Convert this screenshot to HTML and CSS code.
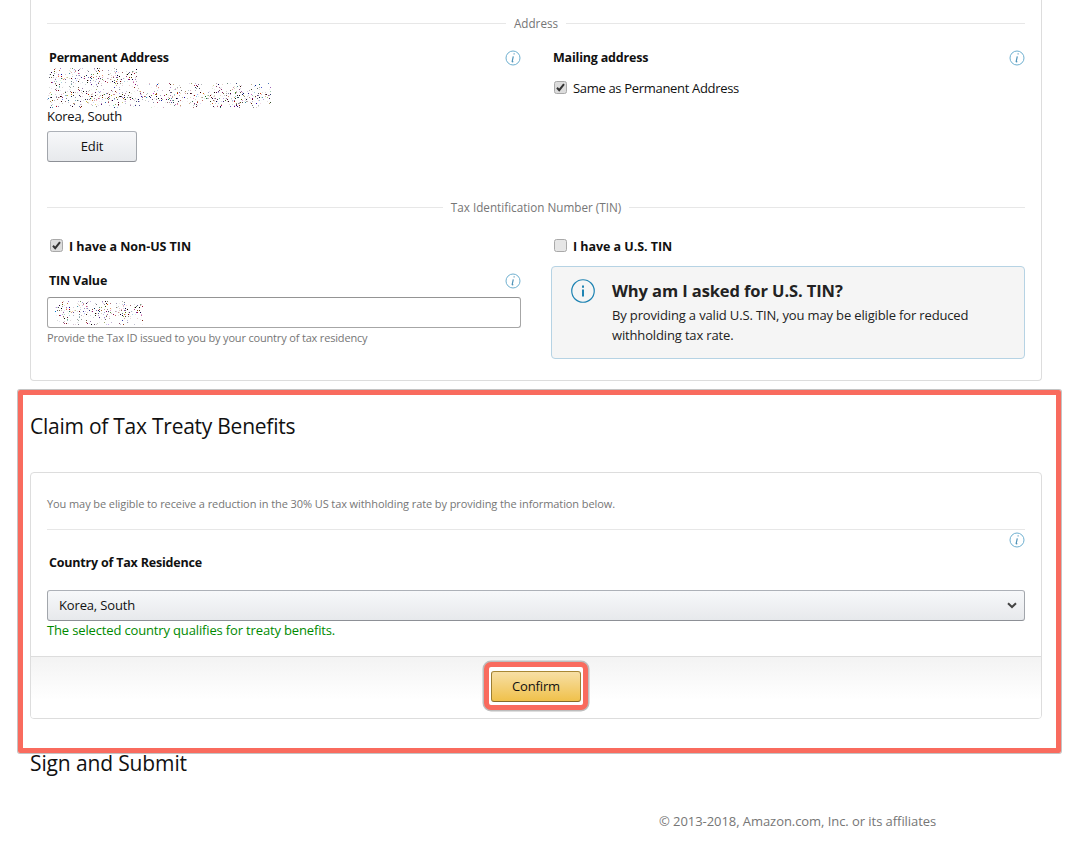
FILE: index.html
```html
<!DOCTYPE html>
<html lang="en">
<head>
<meta charset="utf-8">
<title>Tax Information</title>
<link rel="stylesheet" href="styles.css">
</head>
<body>
<svg class="defs" width="0" height="0" aria-hidden="true">
  <defs>
    <filter id="noise" x="0" y="0" width="100%" height="100%" color-interpolation-filters="sRGB">
      <feTurbulence type="fractalNoise" baseFrequency="0.95" numOctaves="2" seed="7"/>
      <feColorMatrix type="matrix" values="2.2 .8 0 0 -1.2  .4 2.2 .4 0 -1.3  0 .8 2.2 0 -1.2  0 0 0 12 -7.7"/>
    </filter>
    <clipPath id="address-shape">
      <path d="M2 0H90V15H224V40H0V18H2Z"/>
    </clipPath>
    <symbol id="info" viewBox="0 0 16 16">
      <circle cx="8" cy="8" r="7" fill="none" stroke="#6fb0d0" stroke-width="1"/>
      <path d="M8.6 3.9h1M8.3 6.4 7.2 11.4c-.1.6.4.6 1.1.1" fill="none" stroke="#4f93b8" stroke-width="1.2"/>
    </symbol>
    <symbol id="tick" viewBox="0 0 13 13">
      <rect x=".5" y=".5" width="12" height="12" rx="2" fill="#dcdcdc" stroke="#a9a9a9"/>
      <path d="M3 6.8 5.2 9.2 10 3.2" fill="none" stroke="#333" stroke-width="2"/>
    </symbol>
    <symbol id="untick" viewBox="0 0 13 13">
      <rect x=".5" y=".5" width="12" height="12" rx="2" fill="#e6e6e6" stroke="#a9a9a9"/>
    </symbol>
  </defs>
</svg>

<main class="page">
  <section class="card card-top">
    <div class="divider"><span>Address</span></div>
    <div class="cols cols-address">
      <div class="col">
        <div class="field-head">
          <strong>Permanent Address</strong>
          <svg class="icon-info"><use href="#info"/></svg>
        </div>
        <svg class="noise noise-address" width="224" height="40" aria-hidden="true">
          <g clip-path="url(#address-shape)"><rect width="224" height="40" filter="url(#noise)"/></g>
        </svg>
        <div class="country">Korea, South</div>
        <button class="btn btn-edit" type="button">Edit</button>
      </div>
      <div class="col">
        <div class="field-head">
          <strong>Mailing address</strong>
          <svg class="icon-info"><use href="#info"/></svg>
        </div>
        <label class="check check-same">
          <svg class="box"><use href="#tick"/></svg>
          <span>Same as Permanent Address</span>
        </label>
      </div>
    </div>

    <div class="divider divider-tin"><span>Tax Identification Number (TIN)</span></div>
    <div class="cols cols-tin">
      <div class="col">
        <label class="check check-bold">
          <svg class="box"><use href="#tick"/></svg>
          <span>I have a Non-US TIN</span>
        </label>
        <div class="field-head field-tin">
          <strong>TIN Value</strong>
          <svg class="icon-info"><use href="#info"/></svg>
        </div>
        <div class="input">
          <svg class="noise" width="88" height="24" aria-hidden="true">
            <rect width="88" height="24" filter="url(#noise)"/>
          </svg>
        </div>
        <p class="hint">Provide the Tax ID issued to you by your country of tax residency</p>
      </div>
      <div class="col">
        <label class="check check-bold">
          <svg class="box"><use href="#untick"/></svg>
          <span>I have a U.S. TIN</span>
        </label>
        <div class="alert">
          <svg class="alert-icon" viewBox="0 0 24 24" width="24" height="24" aria-hidden="true">
            <circle cx="12" cy="12" r="11.25" fill="none" stroke="#1f84b3" stroke-width="1.2"/>
            <path d="M12 6.6v2.2M12 10.6v7" fill="none" stroke="#1f84b3" stroke-width="2"/>
          </svg>
          <div>
            <h4>Why am I asked for U.S. TIN?</h4>
            <p>By providing a valid U.S. TIN, you may be eligible for reduced withholding tax rate.</p>
          </div>
        </div>
      </div>
    </div>
  </section>

  <section class="claim">
    <div class="highlight"></div>
    <h2 class="claim-title">Claim of Tax Treaty Benefits</h2>
    <div class="card card-claim">
      <div class="claim-body">
        <p class="lead">You may be eligible to receive a reduction in the 30% US tax withholding rate by providing the information below.</p>
        <div class="rule"></div>
        <div class="field-head field-country">
          <strong>Country of Tax Residence</strong>
          <svg class="icon-info"><use href="#info"/></svg>
        </div>
        <div class="select">
          <span>Korea, South</span>
          <svg width="10" height="7" viewBox="0 0 10 7" aria-hidden="true"><path d="M1 1.2 5 5 9 1.2" fill="none" stroke="#444" stroke-width="2"/></svg>
        </div>
        <p class="ok">The selected country qualifies for treaty benefits.</p>
      </div>
      <div class="claim-foot">
        <span class="confirm-ring"><button class="btn btn-confirm" type="button">Confirm</button></span>
      </div>
    </div>
  </section>

  <h2 class="sign-title">Sign and Submit</h2>
  <footer class="copyright">© 2013-2018, Amazon.com, Inc. or its affiliates</footer>
</main>
</body>
</html>
```

FILE: styles.css
```css
* { box-sizing: border-box; }
html, body { margin: 0; padding: 0; background: #fff; }
body {
  font-family: "Open Sans", "Noto Sans", "Liberation Sans", sans-serif;
  font-size: 13px;
  line-height: 19px;
  letter-spacing: -0.15px;
  color: #111;
  height: 844px;
  overflow: hidden;
}
.defs { position: absolute; }
.page { width: 1072px; padding: 0 30px; }
.card { border: 1px solid #ddd; border-radius: 4px; background: #fff; }
.card-top {
  border-top: 0;
  border-radius: 0 0 4px 4px;
  height: 381px;
  padding: 14px 16px 0;
}
.divider {
  display: flex;
  align-items: center;
  gap: 8px;
  height: 19px;
  font-size: 11.7px;
  letter-spacing: 0;
  color: #767676;
}
.divider::before, .divider::after { content: ""; flex: 1; border-top: 1px solid #e7e7e7; }
.divider-tin { margin-top: 18px; }
.cols { display: grid; grid-template-columns: 474px 474px; column-gap: 30px; }
.cols-address { margin-top: 15px; height: 132px; }
.cols-tin { margin-top: 20px; }
.field-head { display: flex; justify-content: space-between; align-items: center; padding-left: 2px; height: 19px; }
.field-head strong { font-weight: 700; font-size: 12.5px; letter-spacing: -0.2px; }
.icon-info { width: 16px; height: 16px; flex: none; }
.noise { display: block; }
.noise-address { margin-top: 1px; }
.country { margin-top: -1px; height: 18px; line-height: 18px; letter-spacing: -0.25px; }
.btn {
  display: block;
  font: inherit;
  letter-spacing: inherit;
  color: #111;
  border-radius: 3px;
  cursor: pointer;
  padding: 0;
}
.btn-edit {
  margin-top: 6px;
  width: 90px;
  height: 31px;
  border: 1px solid #adb1b8;
  border-color: #adb1b8 #a2a6ac #8d9096;
  background: linear-gradient(#f7f8fa, #e7e9ec);
}
.check { display: flex; align-items: center; gap: 6px; padding-left: 2px; height: 19px; }
.box { width: 13px; height: 13px; flex: none; margin-top: -3px; margin-left: 1px; }
.check-same { margin-top: 12px; letter-spacing: -0.32px; }
.check-bold span { font-weight: 700; font-size: 12.5px; letter-spacing: -0.05px; }
.field-tin { margin-top: 15px; }
.input {
  margin-top: 7px;
  height: 31px;
  border: 1px solid #a6a6a6;
  border-top-color: #949494;
  border-radius: 3px;
  padding: 3px 7px;
  background: #fff;
}
.hint { margin: 0; font-size: 11px; letter-spacing: -0.17px; color: #767676; }
.alert {
  display: flex;
  gap: 17px;
  margin-top: 10px;
  height: 93px;
  padding: 12px 19px;
  background: #f5f5f5;
  border: 1px solid #b6d3e4;
  border-radius: 4px;
}
.alert-icon { flex: none; }
.alert h4 { margin: 0; font-size: 16.5px; line-height: 24px; letter-spacing: -0.1px; font-weight: 700; color: #222; }
.alert p { margin: 2px 0 0; line-height: 20px; color: #222; }
.claim { position: relative; height: 372px; padding-top: 31px; }
.highlight {
  position: absolute;
  left: -12px;
  top: 9px;
  width: 1043px;
  height: 363px;
  border: 5px solid #f96b5e;
  border-radius: 2px;
  box-shadow: 0 0 0 1px #c4c4c4;
  pointer-events: none;
}
.claim-title, .sign-title { margin: 0; font-size: 21px; line-height: 28px; font-weight: 400; color: #111; }
.claim-title { letter-spacing: -0.25px; }
.sign-title { margin-top: -4px; letter-spacing: -0.13px; }
.card-claim { margin-top: 32px; height: 247px; overflow: hidden; }
.claim-body { padding: 21px 16px 0; height: 183px; }
.lead { margin: 0; font-size: 11px; letter-spacing: -0.09px; color: #767676; }
.rule { margin-top: 16px; border-top: 1px solid #e7e7e7; }
.field-country { margin-top: 2px; align-items: flex-start; height: 58px; }
.field-country strong { margin-top: 21px; }
.select {
  display: flex;
  justify-content: space-between;
  align-items: center;
  height: 31px;
  padding: 0 7px 0 11px;
  border: 1px solid #adb1b8;
  border-color: #adb1b8 #a2a6ac #8d9096;
  border-radius: 3px;
  background: linear-gradient(#f7f8fa, #e7e9ec);
}
.ok { margin: 0; color: #008a00; height: 19px; }
.claim-foot {
  height: 63px;
  border-top: 1px solid #ddd;
  background: linear-gradient(#f3f3f3, #fff 70%);
  display: flex;
  justify-content: center;
  align-items: flex-start;
  padding-top: 5px;
}
.confirm-ring {
  display: block;
  padding: 4px 2px 3px;
  border: 5px solid #f96b5e;
  border-radius: 7px;
  background: #fff;
  box-shadow: 0 0 0 1.5px #bdbdbd;
}
.btn-confirm {
  width: 90px;
  height: 31px;
  border: 1px solid #a88734;
  border-color: #a88734 #9c7e31 #846a29;
  background: linear-gradient(#f7dfa5, #f0c14b);
}
.copyright { margin: 35px 0 0 629px; letter-spacing: -0.06px; color: #767676; }
```
